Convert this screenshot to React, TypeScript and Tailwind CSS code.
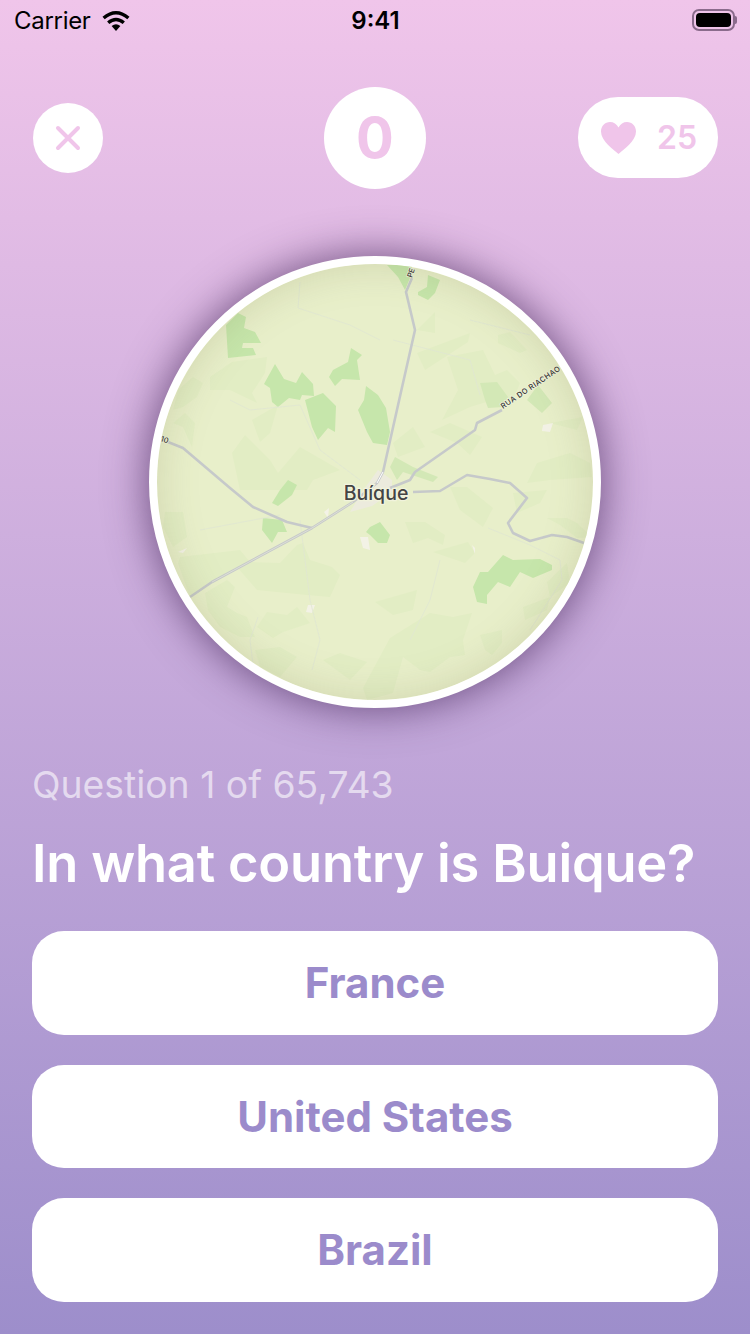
const dark = [
  '238,313 246,317 244,328 255,332 261,343 243,343 242,348 253,348 256,355 228,358 226,325',
  '275,364 284,379 296,383 302,372 313,384 314,396 302,395 300,400 289,398 278,407 272,402 270,388 264,384',
  '323,393 336,406 335,432 328,428 318,440 312,427 305,400',
  '351,348 362,355 357,360 360,380 342,379 335,386 329,377 333,370 348,362',
  '366,386 378,395 386,408 390,432 387,445 373,443 367,432 358,410 364,400',
  '387,265 412,265 410,278 405,290 398,277',
  '428,275 440,280 435,293 428,300 418,295 418,292 427,287',
  '272,503 280,490 288,480 297,485 292,495 278,506',
  '263,518 282,520 287,532 278,532 272,543 262,530',
  '366,532 370,527 380,522 390,535 387,543 378,543 370,535',
  '503,555 513,560 540,559 552,565 552,570 533,578 520,572 510,587 498,582 487,595 487,604 477,602 473,587 480,572 488,572',
]

const mid = [
  '390,467 395,457 413,467 438,477 433,482 403,472 397,480',
  '480,383 497,382 508,397 503,407 488,408 485,400',
  '527,400 538,385 552,403 542,413',
]

const light = [
  '232,362 267,357 265,373 252,393 257,403 230,390 210,390 210,377',
  '278,405 252,420 260,442 270,433',
  '232,453 245,435 270,460 278,473 300,447 340,470 313,480 307,490 240,490',
  '178,390 193,377 203,383 197,397 183,407 173,410',
  '173,423 185,413 195,423 192,447 183,427',
  '417,353 470,333 468,342 425,370',
  '427,320 435,312 435,333 417,330',
  '447,357 483,350 495,375 507,370 520,383 510,407 493,400 470,407 442,420 458,390',
  '498,335 510,332 527,350 520,353 498,343',
  '430,432 450,423 482,437 470,455 457,443',
  '393,443 413,427 425,447 398,457',
  '537,463 570,453 590,463 592,477 550,480 527,483',
  '550,423 583,417 577,430',
  '165,512 183,512 187,537 173,547 163,527',
  '180,557 240,550 250,562 280,563 297,545 303,543 310,560 332,567 340,575 330,597 307,595 257,590 237,567 190,597 178,563',
  '205,593 227,580 235,587 227,607 237,613 247,617 255,637 240,637 220,627 208,610',
  '257,627 267,612 287,615 297,607 310,623 283,632 273,638',
  '255,650 280,647 297,657 280,677 260,667',
  '323,660 340,653 367,662 350,680',
  '450,487 467,487 493,508 483,527 460,510',
  '405,522 425,522 445,535 443,545 428,538 413,543',
  '433,552 468,542 475,553 465,563',
  '375,602 417,590 413,610 393,615',
  '390,638 430,613 453,617 472,613 463,640 465,655 450,657 430,672 420,670 403,657 393,693 367,700 363,688',
  '480,635 502,630 502,643 492,655 485,650',
  '523,607 550,597 547,610 525,620',
  '547,582 567,563 570,583 550,597',
  '547,518 567,518 577,523 592,537 577,538 560,525',
  '513,493 547,490 540,503 517,513',
]

const spots = [
  '543,425 553,423 550,432 542,431',
  '360,537 368,537 370,550 363,548',
  '308,605 315,605 312,613 306,612',
  '178,552 187,548 183,553',
  '324,512 329,508 328,518',
  '472,545 475,548 475,554',
]

const roads = [
  '412,278 406,292 415,330 403,383 383,472 377,483 353,502 312,528 212,582 190,597',
  '502,410 477,423 475,430 415,472 410,480 390,488',
  '413,492 440,491 467,475 490,479 510,483 527,498 508,523 513,533 530,541 552,535 567,537 584,543',
  '168,442 183,448 230,488 253,507 287,522 312,528',
]

const tracks = [
  '300,282 298,308 350,325 380,340',
  '230,400 250,410 300,405 320,450 360,480',
  '393,340 470,360 480,395',
  '470,320 530,335',
  '200,530 280,515',
  '300,520 305,560 310,600 320,640 312,670',
  '440,560 430,600 420,620 410,640',
  '488,528 530,545 560,560 562,580 530,630',
  '258,617 250,640 255,680',
]

function MapCircle() {
  return (
    <div className="relative size-[452px] rounded-full border-8 border-white shadow-[0_0_42px_2px_rgba(70,40,90,0.7)] overflow-hidden bg-[#e8efca]">
      <svg viewBox="157 264 436 436" className="size-[436px]">
        {light.map((p) => (
          <polygon key={p} points={p} fill="#e2edc4" />
        ))}
        {mid.map((p) => (
          <polygon key={p} points={p} fill="#d3e8b6" />
        ))}
        {dark.map((p) => (
          <polygon key={p} points={p} fill="#c6e6ab" />
        ))}
        {spots.map((p) => (
          <polygon key={p} points={p} fill="#f3f2e6" />
        ))}
        {tracks.map((p) => (
          <polyline key={p} points={p} fill="none" stroke="#dfe6d2" strokeWidth="0.8" />
        ))}
        <polygon points="362,492 378,470 392,480 392,492 372,506 350,512" fill="#ecebdd" />
        {roads.map((p) => (
          <polyline key={p} points={p} fill="none" stroke="#c6c9ca" strokeWidth="2.6" strokeLinejoin="round" />
        ))}
        <polyline points="353,502 312,528 212,582" fill="none" stroke="#e2e5d8" strokeWidth="0.8" />
        <polyline points="383,472 377,483" fill="none" stroke="#ffffff" strokeWidth="1" />
        <text x="376" y="499.5" textAnchor="middle" className="font-['Inter',sans-serif] text-[19.5px] font-medium" fill="#444444" stroke="#f1f3dc" strokeWidth="2.5" paintOrder="stroke">
          Buíque
        </text>
        <text transform="translate(503 409) rotate(-34)" className="font-['Inter',sans-serif] text-[7.5px] font-medium tracking-[0.4px]" fill="#333333" stroke="#f1f3dc" strokeWidth="1.5" paintOrder="stroke">
          RUA DO RIACHAO
        </text>
        <text transform="translate(412 278) rotate(-72)" className="font-['Inter',sans-serif] text-[7.5px] font-medium" fill="#333333" stroke="#f1f3dc" strokeWidth="1.5" paintOrder="stroke">
          PE
        </text>
        <text transform="translate(160 441) rotate(18)" className="font-['Inter',sans-serif] text-[7.5px] font-medium" fill="#333333" stroke="#f1f3dc" strokeWidth="1.5" paintOrder="stroke">
          10
        </text>
      </svg>
      <div className="absolute inset-0 rounded-full shadow-[inset_0_0_40px_rgba(120,120,70,0.22)]" />
    </div>
  )
}

function StatusBar() {
  return (
    <div className="h-[42px] pl-[14px] pr-[13px] grid grid-cols-3 items-center text-black font-['Inter',sans-serif]">
      <div className="flex items-center gap-[10px]">
        <span className="text-[24px] leading-none tracking-[-0.3px]">Carrier</span>
        <svg width="30" height="22" viewBox="0 0 30 22" className="-mt-[1px]">
          <path d="M15 21 L10.6 16 Q15 12.4 19.4 16 Z" fill="#000" />
          <path d="M7.2 12.8 Q15 6.2 22.8 12.8" fill="none" stroke="#000" strokeWidth="3.4" />
          <path d="M2.6 8 Q15 -2.6 27.4 8" fill="none" stroke="#000" strokeWidth="3.4" />
        </svg>
      </div>
      <div className="text-center text-[24px] leading-none font-semibold">9:41</div>
      <div className="flex justify-end items-center -mt-[2px]">
        <div className="w-[43px] h-[22px] rounded-[7px] border-2 border-[#8a6b8c] p-[2px]">
          <div className="h-full w-full rounded-[4px] bg-black" />
        </div>
        <div className="w-[2px] h-[8px] rounded-r-sm bg-[#8a6b8c]" />
      </div>
    </div>
  )
}

function Header() {
  return (
    <div className="mt-[45px] h-[102px] px-[32px] grid grid-cols-3 items-center text-[#f0c5ea] font-['Inter',sans-serif]">
      <button className="size-[70px] ml-px rounded-full bg-white flex items-center justify-center">
        <svg width="28" height="28" viewBox="0 0 28 28">
          <path d="M4 4 L24 24 M24 4 L4 24" stroke="#f0c5ea" strokeWidth="4" strokeLinecap="round" />
        </svg>
      </button>
      <div className="size-[102px] justify-self-center rounded-full bg-white flex items-center justify-center text-[56px] font-bold leading-none">0</div>
      <div className="w-[140px] h-[81px] justify-self-end self-start mt-[10px] rounded-[40px] bg-white flex items-center pl-[23px] gap-[21px]">
        <svg width="35" height="32" viewBox="0 0 35 32">
          <path d="M17.5 32 C12 27 0 19 0 9.5 C0 4 4 0 9 0 C12.6 0 15.8 2 17.5 5.5 C19.2 2 22.4 0 26 0 C31 0 35 4 35 9.5 C35 19 23 27 17.5 32 Z" fill="#f0c5ea" />
        </svg>
        <span className="text-[32px] font-semibold leading-none">25</span>
      </div>
    </div>
  )
}

export default function App() {
  const answers = ['France', 'United States', 'Brazil']
  return (
    <div className="w-[750px] h-[1334px] overflow-hidden bg-gradient-to-b from-[#f0c5ea] to-[#9d8ecb]">
      <StatusBar />
      <Header />
      <div className="mt-[67px] flex justify-center">
        <MapCircle />
      </div>
      <div className="px-[32px] font-['Inter',sans-serif]">
        <p className="mt-[55px] text-[37.3px] leading-[44px] text-white/60">Question 1 of 65,743</p>
        <h1 className="mt-[26px] text-[52.4px] leading-[60px] font-semibold tracking-[-0.2px] whitespace-nowrap text-white">In what country is Buique?</h1>
        <div className="mt-[38px] flex flex-col gap-[30px]">
          {answers.map((a) => (
            <button key={a} className="h-[103.5px] rounded-[32px] bg-white text-[42px] font-bold text-[#9b8bcb]">
              {a}
            </button>
          ))}
        </div>
      </div>
    </div>
  )
}
